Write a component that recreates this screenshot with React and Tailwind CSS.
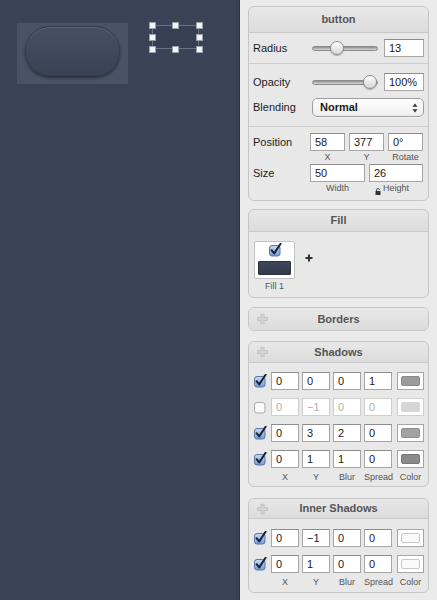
import React from "react";

const Check = ({ on, faded }) =>
  on ? (
    <svg width="13" height="14" viewBox="0 0 13 14" className="shrink-0">
      <defs>
        <linearGradient id="cbg" x1="0" y1="0" x2="0" y2="1">
          <stop offset="0" stopColor="#c9dcf3" />
          <stop offset="1" stopColor="#6f9bd6" />
        </linearGradient>
      </defs>
      <rect x="0.5" y="2.5" width="10.5" height="10.5" rx="2.5" fill="url(#cbg)" stroke="#5877a6" />
      <path d="M2.6 7.2 L5.2 10.4 L11.6 0.8" fill="none" stroke="#1b2233" strokeWidth="2" strokeLinecap="round" strokeLinejoin="round" />
    </svg>
  ) : (
    <svg width="13" height="14" viewBox="0 0 13 14" className="shrink-0">
      <rect x="0.5" y="2.5" width="10.5" height="10.5" rx="2.5" fill="#fbfbfb" stroke={faded ? "#a8a8a8" : "#888"} />
    </svg>
  );

const GrayPlus = () => (
  <svg width="11" height="11" viewBox="0 0 11 11" className="shrink-0">
    <path d="M4 0.5 H7 V4 H10.5 V7 H7 V10.5 H4 V7 H0.5 V4 H4 Z" fill="#d4d4d4" stroke="#bdbdbd" strokeWidth="0.8" />
  </svg>
);

const Field = ({ v, w, dim }) => (
  <div
    className={`h-[18px] ${w} shrink-0 bg-white border ${
      dim ? "border-[#cfcfcf] text-[#b0b0b0]" : "border-[#a6a6a6] border-t-[#8c8c8c] text-[#1a1a1a]"
    } flex items-center pl-[4px] text-[11px] leading-none`}
  >
    {v}
  </div>
);

const Swatch = ({ inner, dim }) => (
  <div
    className={`h-[18px] w-[27px] shrink-0 bg-white border ${
      dim ? "border-[#d0d0d0]" : "border-[#a6a6a6]"
    } p-[3px]`}
  >
    <div className={`w-full h-full rounded-[2px] ${inner}`} />
  </div>
);

const Header = ({ title, plus, h }) => (
  <div
    className={`${h} relative flex items-center justify-center bg-linear-to-b from-[#e8e8e8] to-[#dcdcdc] border-b border-[#c9c9c9] rounded-t-[6px]`}
  >
    {plus && (
      <div className="absolute left-[8px] top-1/2 -translate-y-1/2 flex">
        <GrayPlus />
      </div>
    )}
    <span className="text-[11px] font-bold text-[#555]">{title}</span>
  </div>
);

const Slider = ({ knob }) => (
  <div className="relative w-[66px] h-[14px] flex items-center ml-[2px] shrink-0">
    <div className="w-full h-[5px] rounded-full bg-linear-to-b from-[#8e8e8e] to-[#d9d9d9] border border-[#8a8a8a]" />
    <div
      className={`absolute top-[0px] ${knob} w-[14px] h-[14px] rounded-full bg-linear-to-b from-white to-[#d6d6d6] border border-[#8d8d8d] shadow-[0_1px_1px_rgba(0,0,0,0.25)]`}
    />
  </div>
);

const Row = ({ items }) => (
  <div className="flex items-center h-[18px]">
    <div className="w-[12px] flex justify-start mr-[5px]">
      <Check on={items.on} faded={!items.on} />
    </div>
    <div className="flex gap-[3px]">
      {items.vals.map((v, i) => (
        <Field key={i} v={v} w="w-[28px]" dim={!items.on} />
      ))}
      <div className="ml-[2px]">
        <Swatch inner={items.sw} dim={!items.on} />
      </div>
    </div>
  </div>
);

const Labels = () => (
  <div className="flex h-[12px] items-center text-[9px] text-[#555] pl-[17px]">
    <div className="w-[28px] text-center">X</div>
    <div className="w-[3px]" />
    <div className="w-[28px] text-center">Y</div>
    <div className="w-[3px]" />
    <div className="w-[28px] text-center">Blur</div>
    <div className="w-[3px]" />
    <div className="w-[28px] text-center">Spread</div>
    <div className="w-[5px]" />
    <div className="w-[27px] text-center">Color</div>
  </div>
);

export default function App() {
  return (
    <div className="w-[437px] h-[600px] flex overflow-hidden font-['Liberation_Sans',Arial,sans-serif] select-none">
      {/* Canvas */}
      <div className="relative w-[240px] h-full bg-[#3a4256] border-r border-[#2c3241]">
        <div className="absolute left-[17px] top-[23px] w-[111px] h-[61px] bg-[#4a5265]" />
        <div className="absolute left-[25px] top-[26px] w-[95px] h-[50px] rounded-full bg-linear-to-b from-[#465064] to-[#3a4255] border border-[#323a4b] shadow-[0_2px_3px_rgba(0,0,0,0.45),inset_0_1px_0_rgba(255,255,255,0.12)]" />
        <div className="absolute left-[152px] top-[25px] w-[47px] h-[24px] bg-[#373f52] border border-[#6b7385]" />
        {[
          [149, 22],
          [172, 22],
          [196, 22],
          [149, 34],
          [196, 34],
          [149, 46],
          [172, 46],
          [196, 46],
        ].map(([x, y], i) => (
          <div
            key={i}
            className="absolute w-[7px] h-[7px] bg-[#f4f4f4] border border-[#9aa0ac]"
            style={{ left: x, top: y }}
          />
        ))}
      </div>

      {/* Inspector */}
      <div className="w-[197px] h-full bg-[#ebebeb] px-[8px] flex flex-col text-[#1c1c1c]">
        {/* button card */}
        <div className="mt-[6px] border border-[#c6c6c6] rounded-[6px] bg-[#e8e8e8]">
          <Header title="button" h="h-[26px]" />
          <div className="h-[31px] flex items-center pl-[4px] border-b border-[#cdcdcd]">
            <div className="w-[57px] text-[11px]">Radius</div>
            <Slider knob="left-[18px]" />
            <div className="ml-[6px]">
              <Field v="13" w="w-[40px]" />
            </div>
          </div>
          <div className="pt-[9px] pb-[9px] pl-[4px] border-b border-[#cdcdcd]">
            <div className="flex items-center h-[18px]">
              <div className="w-[57px] text-[11px]">Opacity</div>
              <Slider knob="left-[51px]" />
              <div className="ml-[6px]">
                <Field v="100%" w="w-[40px]" />
              </div>
            </div>
            <div className="flex items-center h-[19px] mt-[7px]">
              <div className="w-[57px] text-[11px]">Blending</div>
              <div className="ml-[2px] w-[112px] h-[19px] rounded-[5px] border border-[#9d9d9d] bg-linear-to-b from-white to-[#eeeeee] flex items-center justify-between pl-[7px] pr-[5px] shadow-[0_1px_0_rgba(255,255,255,0.6)]">
                <span className="text-[11px] font-bold">Normal</span>
                <svg width="6" height="10" viewBox="0 0 6 10">
                  <path d="M3 0.5 L5.5 3.8 H0.5 Z" fill="#333" />
                  <path d="M3 9.5 L5.5 6.2 H0.5 Z" fill="#333" />
                </svg>
              </div>
            </div>
          </div>
          <div className="pt-[6px] pb-[6px] pl-[4px]">
            <div className="flex items-center h-[18px]">
              <div className="w-[57px] text-[11px]">Position</div>
              <div className="flex gap-[4px]">
                <Field v="58" w="w-[35px]" />
                <Field v="377" w="w-[35px]" />
                <Field v="0°" w="w-[35px]" />
              </div>
            </div>
            <div className="flex h-[12px] items-center text-[9px] text-[#555] pl-[57px] pt-[1px]">
              <div className="w-[35px] text-center">X</div>
              <div className="w-[4px]" />
              <div className="w-[35px] text-center">Y</div>
              <div className="w-[4px]" />
              <div className="w-[35px] text-center">Rotate</div>
            </div>
            <div className="flex items-center h-[18px] mt-[1px]">
              <div className="w-[57px] text-[11px]">Size</div>
              <div className="flex gap-[4px]">
                <Field v="50" w="w-[55px]" />
                <Field v="26" w="w-[54px]" />
              </div>
            </div>
            <div className="relative flex h-[12px] items-center text-[9px] text-[#555] pl-[57px] pt-[1px]">
              <div className="w-[55px] text-center">Width</div>
              <div className="w-[4px]" />
              <div className="w-[54px] text-center">Height</div>
              <svg
                width="6"
                height="7"
                viewBox="0 0 6 7"
                className="absolute left-[122px] top-[6px]"
              >
                <path d="M1.5 3 V2 A1.5 1.5 0 0 1 4.5 2" fill="none" stroke="#444" strokeWidth="0.9" />
                <rect x="0.5" y="3" width="5" height="4" fill="#333" />
              </svg>
            </div>
          </div>
        </div>

        {/* Fill card */}
        <div className="mt-[8px] border border-[#c6c6c6] rounded-[6px] bg-[#e8e8e8]">
          <Header title="Fill" h="h-[22px]" />
          <div className="pt-[9px] pb-[4px] pl-[5px]">
            <div className="flex items-start">
              <div className="w-[41px] h-[38px] bg-white border border-[#c2c2c2] rounded-[2px] flex flex-col items-center pt-[1px]">
                <div className="pl-[2px]">
                  <Check on />
                </div>
                <div className="mt-[4px] w-[33px] h-[14px] rounded-[1px] bg-linear-to-b from-[#3f475b] to-[#333a4b] border border-[#2a3040]" />
              </div>
              <svg width="8" height="8" viewBox="0 0 8 8" className="ml-[10px] mt-[13px]">
                <path d="M4 0.5 V7.5 M0.5 4 H7.5" stroke="#333" strokeWidth="2" />
              </svg>
            </div>
            <div className="w-[41px] h-[12px] mt-[2px] flex items-center justify-center text-[9px] text-[#555]">
              Fill 1
            </div>
          </div>
        </div>

        {/* Borders card */}
        <div className="mt-[9px] border border-[#c6c6c6] rounded-[6px] overflow-hidden">
          <div className="h-[22px] relative flex items-center justify-center bg-linear-to-b from-[#e8e8e8] to-[#dcdcdc]">
            <div className="absolute left-[8px] top-1/2 -translate-y-1/2 flex">
              <GrayPlus />
            </div>
            <span className="text-[11px] font-bold text-[#555]">Borders</span>
          </div>
        </div>

        {/* Shadows card */}
        <div className="mt-[10px] border border-[#c6c6c6] rounded-[6px] bg-[#e8e8e8]">
          <Header title="Shadows" plus h="h-[21px]" />
          <div className="pt-[9px] pb-[2px] pl-[5px]">
            <div className="flex flex-col gap-[8px]">
              <Row items={{ on: true, vals: ["0", "0", "0", "1"], sw: "bg-[#9b9b9b] border border-[#8a8a8a]" }} />
              <Row items={{ on: false, vals: ["0", "−1", "0", "0"], sw: "bg-[#d6d6d6]" }} />
              <Row items={{ on: true, vals: ["0", "3", "2", "0"], sw: "bg-[#a3a3a3] border border-[#8f8f8f]" }} />
              <Row items={{ on: true, vals: ["0", "1", "1", "0"], sw: "bg-[#8a8a8a] border border-[#777]" }} />
            </div>
            <div className="mt-[4px]">
              <Labels />
            </div>
          </div>
        </div>

        {/* Inner Shadows card */}
        <div className="mt-[11px] border border-[#c6c6c6] rounded-[6px] bg-[#e8e8e8]">
          <Header title="Inner Shadows" plus h="h-[20px]" />
          <div className="pt-[10px] pb-[3px] pl-[5px]">
            <div className="flex flex-col gap-[8px]">
              <Row items={{ on: true, vals: ["0", "−1", "0", "0"], sw: "bg-[#fafafa] border border-[#c8c8c8]" }} />
              <Row items={{ on: true, vals: ["0", "1", "0", "0"], sw: "bg-[#fafafa] border border-[#c8c8c8]" }} />
            </div>
            <div className="mt-[4px]">
              <Labels />
            </div>
          </div>
        </div>
      </div>
    </div>
  );
}
